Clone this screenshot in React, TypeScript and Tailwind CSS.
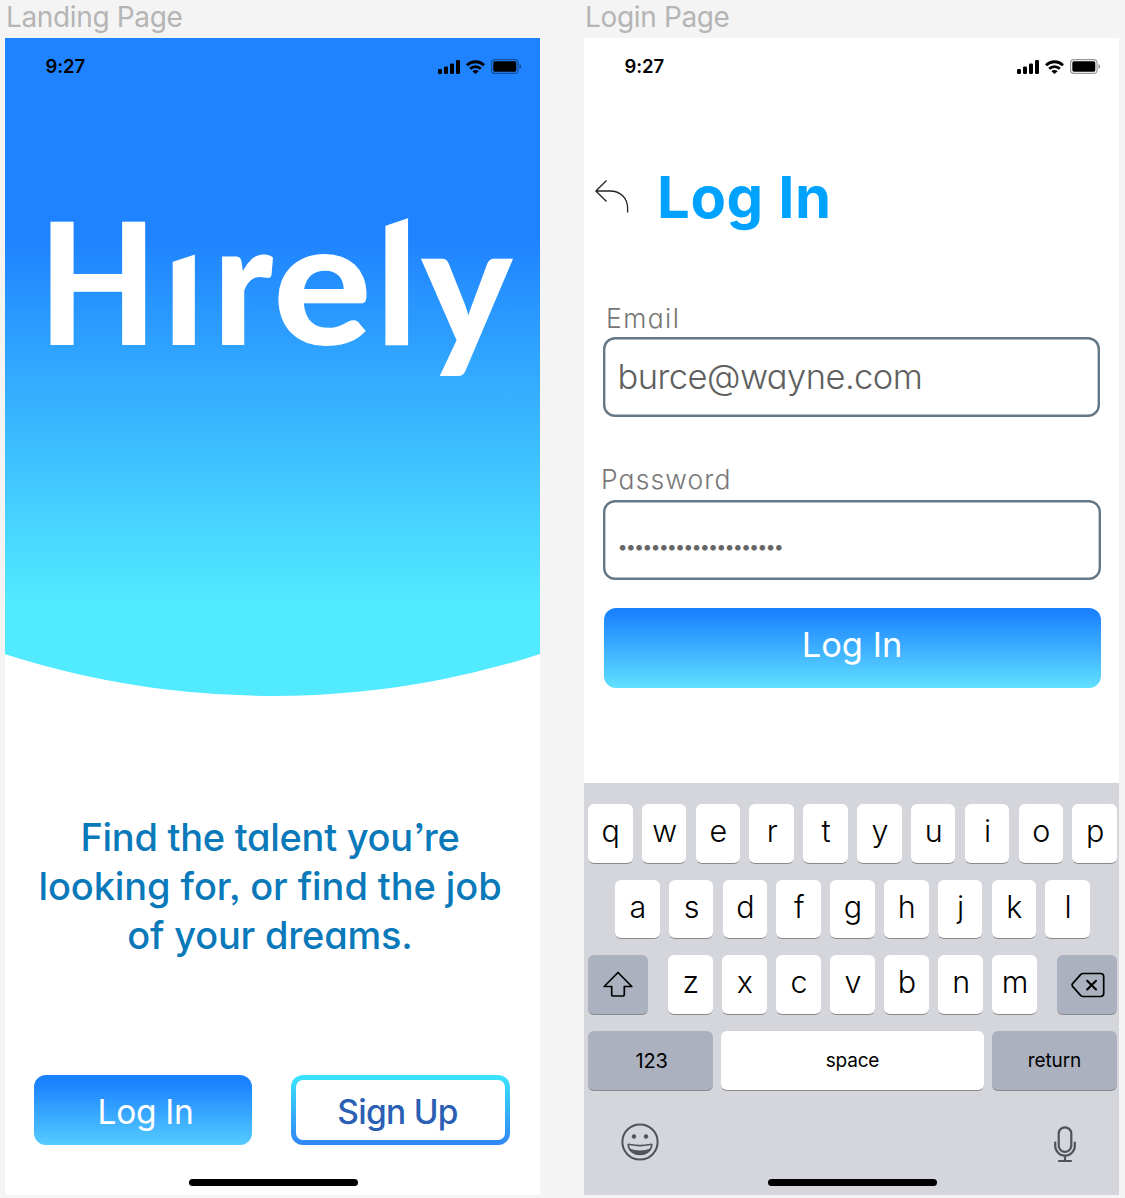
import type { ReactNode } from "react";

const rounded = "font-[Inter] [font-feature-settings:'cv11','ss03']";

function StatusBar() {
  return (
    <div className="flex h-14 shrink-0 items-center justify-between pr-[18px] pl-[40.5px] font-[Inter] text-black">
      <span className="pt-[2px] text-[18.5px] font-semibold tracking-[-0.1px]">9:27</span>
      <div className="flex items-center gap-[6px] pt-px">
        <svg width="22" height="14" viewBox="0 0 22 14" fill="currentColor">
          <rect x="0" y="9" width="4" height="5" rx="1.2" />
          <rect x="6" y="6.5" width="4" height="7.5" rx="1.2" />
          <rect x="12" y="3.5" width="4" height="10.5" rx="1.2" />
          <rect x="18" y="0" width="4" height="14" rx="1.2" />
        </svg>
        <svg width="19" height="14" viewBox="0 0 19 14" fill="none" stroke="currentColor" strokeWidth="2.8">
          <path d="M1 5.2A12.2 12.2 0 0 1 18 5.2" />
          <path d="M4.2 8.7A7.6 7.6 0 0 1 14.8 8.7" />
          <path d="M6.4 11.2a4.4 4.4 0 0 1 6.2 0L9.5 14Z" fill="currentColor" stroke="none" />
        </svg>
        <svg width="31" height="15" viewBox="0 0 31 15">
          <rect x="0.6" y="0.6" width="26.4" height="13.8" rx="3.2" fill="none" stroke="currentColor" strokeOpacity="0.4" strokeWidth="1.2" />
          <rect x="2.3" y="2.3" width="23" height="10.4" rx="1.6" fill="currentColor" />
          <path d="M28.5 5v5c1-.4 1.6-1.4 1.6-2.5S29.5 5.4 28.5 5Z" fill="currentColor" fillOpacity="0.45" />
        </svg>
      </div>
    </div>
  );
}

function HomeIndicator() {
  return <div className="h-[7px] w-[169px] rounded-full bg-black" />;
}

function Wordmark() {
  return (
    <div className="mt-[85px] flex h-[200px] font-[Lato] text-[172px] leading-[200px] font-black whitespace-nowrap text-white">
      <span className="ml-[43px] w-[124px]"><span className="-ml-[9.5px] inline-block origin-[0_166px] scale-x-[0.885] scale-y-[0.985]">H</span></span>
      <span className="w-[48px]"><span className="-ml-[9px] inline-block origin-[0_166px] scale-x-[0.93] scale-y-[1.04] [clip-path:polygon(0_89px,100%_76px,100%_100%,0_100%)]">i</span></span>
      <span className="w-[58px]"><span className="-ml-[7px] inline-block origin-[0_166px] scale-x-[0.93]">r</span></span>
      <span className="w-[107px]"><span className="-ml-[5px] inline-block origin-[0_166px] scale-x-[1.07] scale-y-[1.01]">e</span></span>
      <span className="w-[36px]"><span className="-ml-[9px] inline-block origin-[0_166px] scale-x-[0.95] [clip-path:polygon(0_50px,100%_36px,100%_100%,0_100%)]">l</span></span>
      <span className="w-[91px]"><span className="inline-block origin-[0_166px] pt-[2px]">y</span></span>
    </div>
  );
}

function LandingPage() {
  return (
    <section className="w-[535px]">
      <h2 className="h-[38px] pl-px font-[Inter] text-[28px] leading-[35px] tracking-[-0.35px] text-[#b5b5b5]">Landing Page</h2>
      <div className="flex h-[1157px] flex-col bg-white">
        <div className="h-[658px] shrink-0 bg-[linear-gradient(180deg,#1f83ff_0px,#1f83ff_200px,#52eaff_565px,#52eaff_100%)] [clip-path:circle(873px_at_50%_-215px)]">
          <StatusBar />
          <Wordmark />
        </div>
        <p className={`mt-[117px] pr-[5px] text-center text-[38px] leading-[49px] font-medium text-[#0a79ba] ${rounded}`}>
          <span className="block tracking-[-0.27px]">Find the talent you’re</span>
          <span className="block tracking-[-0.08px]">looking for, or find the job</span>
          <span className="block tracking-[-0.2px]">of your dreams.</span>
        </p>
        <div className={`mt-[115.4px] flex gap-[39px] pl-[29px] text-[33.5px] ${rounded}`}>
          <button className="h-[70px] w-[218px] rounded-[12px] bg-[linear-gradient(180deg,#1a82ff_10%,#55cbff)] pt-[3px] pl-[5px] tracking-[-0.3px] text-white">Log In</button>
          <button className="h-[70px] w-[219px] rounded-[12px] border-[5px] border-transparent pt-[3px] pr-[8px] font-medium tracking-[-0.7px] text-[#2b5fb4] [background:linear-gradient(#fff,#fff)_padding-box,linear-gradient(180deg,#3ae4ff,#2f86f5)_border-box]"><span className="pl-[2px]">Sign Up</span></button>
        </div>
        <div className="mt-[33.6px] ml-[184px]"><HomeIndicator /></div>
      </div>
    </section>
  );
}

function Key({ children, className = "w-[44.6px] bg-white" }: { children: ReactNode; className?: string }) {
  return (
    <div className={`flex h-[59.5px] items-center justify-center rounded-[6px] border-b border-[#898a8d] ${className}`}>{children}</div>
  );
}

function Letters({ letters }: { letters: string }) {
  return (
    <>
      {letters.split("").map((l) => (
        <Key key={l}>
          <span className="pb-[4px] pl-[1px] text-[30.5px] leading-none font-light">{l}</span>
        </Key>
      ))}
    </>
  );
}

function Keyboard() {
  return (
    <div className="flex h-[412px] shrink-0 flex-col bg-[#d4d6dc] pt-[21px] font-[Inter] text-black">
      <div className="flex flex-col gap-[16px] pr-[2px] pl-[4px]">
        <div className="flex justify-between"><Letters letters="qwertyuiop" /></div>
        <div className="flex justify-between px-[27px]"><Letters letters="asdfghjkl" /></div>
        <div className="flex justify-between">
          <Key className="w-[60px] bg-[#abb1be]">
            <svg className="mt-px" width="30" height="27" viewBox="0 0 30 27" fill="none" stroke="currentColor" strokeWidth="1.7" strokeLinejoin="round">
              <path d="M15 1.5 1.2 15.5H8.7V23.5a1.5 1.5 0 0 0 1.5 1.5h9.6a1.5 1.5 0 0 0 1.5-1.5V15.5h7.5Z" />
            </svg>
          </Key>
          <div className="flex w-[369px] justify-between"><Letters letters="zxcvbnm" /></div>
          <Key className="w-[60px] bg-[#abb1be]">
            <svg className="mt-[2px] ml-[2px]" width="34" height="26" viewBox="0 0 34 26" fill="none" stroke="currentColor" strokeWidth="1.7" strokeLinejoin="round" strokeLinecap="round">
              <path d="M12 1.5H29.5a3.2 3.2 0 0 1 3.2 3.2V21.3a3.2 3.2 0 0 1-3.2 3.2H12c-1 0-1.7-.4-2.4-1.1L1.8 14.6c-1-1.1-1-2.1 0-3.2L9.6 2.6C10.3 1.9 11 1.5 12 1.5Z" />
              <path d="M16.2 8.8 25 17.5M25 8.8 16.2 17.5" strokeWidth="2.1" />
            </svg>
          </Key>
        </div>
        <div className="flex justify-between pt-[0.5px] text-[19px] leading-none">
          <Key className="w-[125px] bg-[#abb1be]"><span className="pt-[2px] pl-[2px] text-[20px] tracking-[-0.2px]">123</span></Key>
          <Key className="w-[262.5px] bg-white"><span className="pt-px tracking-[-0.2px]">space</span></Key>
          <Key className="w-[125px] bg-[#abb1be]"><span className="pt-px tracking-[-0.1px]">return</span></Key>
        </div>
      </div>
      <div className="mt-[32.5px] flex h-[40px] justify-between pr-[43px] pl-[37px] text-[#50535b]">
        <svg width="38" height="38" viewBox="0 0 38 38" fill="none" stroke="currentColor" strokeWidth="2">
          <circle cx="19" cy="19" r="17.6" />
          <circle cx="13" cy="13.5" r="2.2" fill="currentColor" stroke="none" />
          <circle cx="25" cy="13.5" r="2.2" fill="currentColor" stroke="none" />
          <path d="M7.2 22.5c0-1.3.6-1.3 1.8-1 6.5 1.4 13.5 1.4 20 0 1.2-.3 1.8-.3 1.8 1C29.8 28 25 31.3 19 31.3S8.2 28 7.2 22.5Z" strokeWidth="1.7" />
          <path d="M8.6 25.5c6.5 2.5 14.3 2.5 20.8 0C27.5 29.5 23.6 31.3 19 31.3S10.5 29.5 8.6 25.5Z" fill="currentColor" stroke="none" />
        </svg>
        <svg className="mt-[3px]" width="22" height="37" viewBox="0 0 22 37" fill="none" stroke="currentColor" strokeWidth="2.2" strokeLinecap="round">
          <rect x="4.7" y="1.3" width="12.6" height="24.5" rx="6.3" />
          <path d="M1.2 16.5v3.3a9.8 9.8 0 0 0 19.6 0v-3.3M11 29.8v5M5 35h12" />
        </svg>
      </div>
      <div className="mt-[15.5px] ml-[184px]"><HomeIndicator /></div>
    </div>
  );
}

function LoginPage() {
  return (
    <section className="w-[535px]">
      <h2 className="h-[38px] pl-px font-[Inter] text-[28px] leading-[35px] tracking-[-0.35px] text-[#b5b5b5]">Login Page</h2>
      <div className="flex h-[1157px] flex-col bg-white">
        <StatusBar />
        <div className={`mt-[63px] flex h-[80px] shrink-0 items-center pl-[11px] ${rounded}`}>
          <svg className="-mt-[3px] shrink-0" width="34" height="34" viewBox="0 0 34 34" fill="none" stroke="#222" strokeWidth="1.3" strokeLinejoin="round">
            <path d="M11.5 1.5.9 12 11.5 22.5M.9 12H15C26 12 32.6 19.5 32.6 29v4.5" />
          </svg>
          <h1 className="ml-[28px] text-[58px] leading-[80px] font-bold tracking-[0.6px] text-[#00a2ff]">Log In</h1>
        </div>
        <div className={`flex h-[546px] shrink-0 flex-col ${rounded}`}>
          <label className="mt-[63px] ml-[22px] h-[37px] text-[26.5px] leading-[37px] font-light tracking-[1.4px] text-[#777]">Email</label>
          <div className="ml-[18.5px] flex h-[80px] w-[497.5px] items-center rounded-[12px] pl-[15px] text-[34.5px] font-light tracking-[-0.55px] text-[#606060] shadow-[inset_0_0_0_2.4px_#667885]">
            <span>burce@wayne.com</span>
          </div>
          <label className="mt-[44px] ml-[17px] h-[37px] text-[26.5px] leading-[37px] font-light tracking-[1.1px] text-[#777]">Password</label>
          <div className="mt-[2px] ml-[18.5px] flex h-[80px] w-[498.5px] items-center rounded-[12px] pl-[15px] text-[#666] shadow-[inset_0_0_0_2.4px_#667885]">
            <span className="pt-[14px] text-[18px] leading-none tracking-[-1.9px]">••••••••••••••••••••</span>
          </div>
          <button className="mt-[27.5px] ml-[20px] h-[80px] w-[497px] rounded-[12px] bg-[linear-gradient(180deg,#1a82ff_5%,#62e0ff)] pr-[1px] pb-[6px] text-[34.5px] text-white">Log In</button>
        </div>
        <Keyboard />
      </div>
    </section>
  );
}

export default function App() {
  return (
    <main className="flex h-[1198px] w-[1125px] gap-[44px] overflow-hidden bg-[#f4f4f4] pl-[5px]">
      <LandingPage />
      <LoginPage />
    </main>
  );
}
